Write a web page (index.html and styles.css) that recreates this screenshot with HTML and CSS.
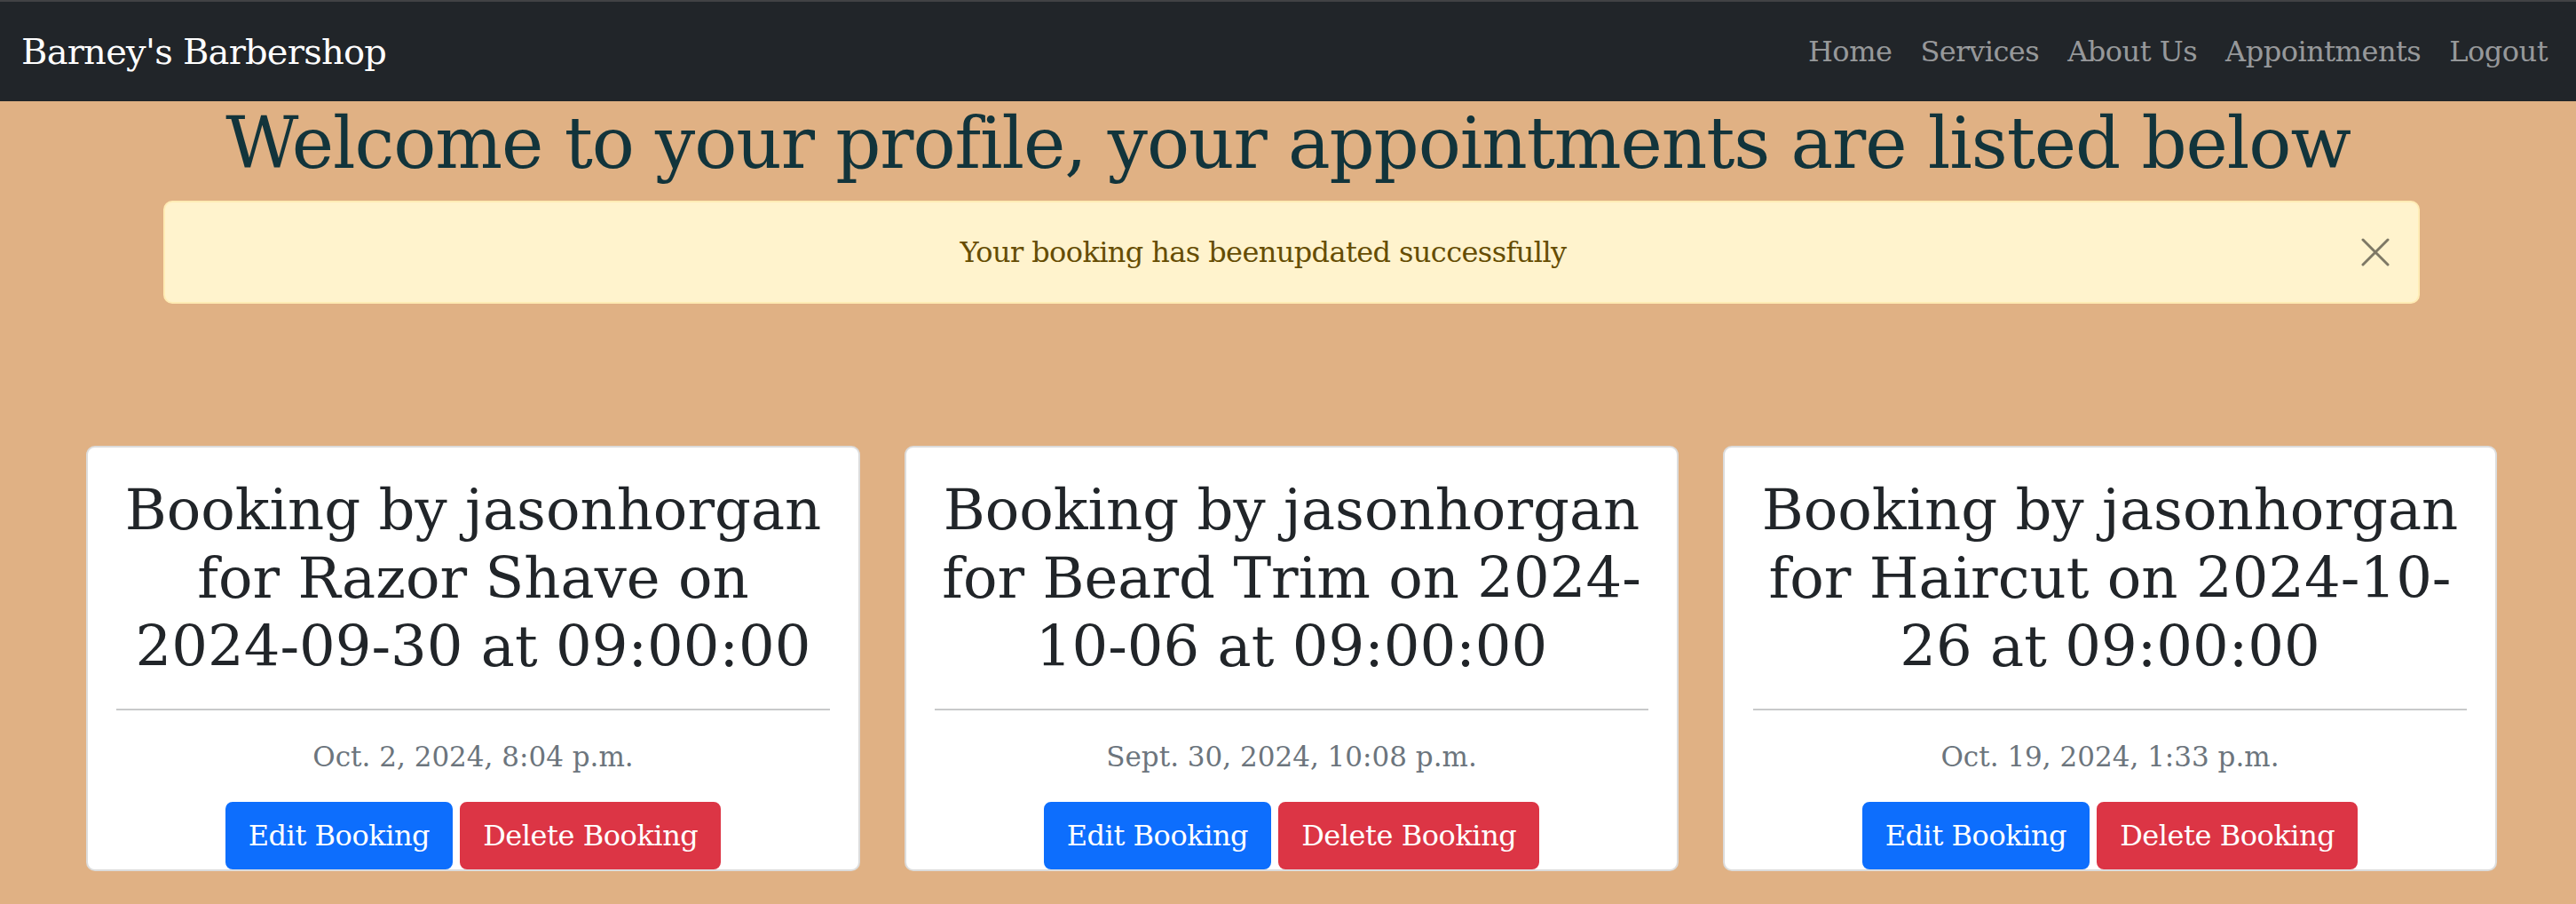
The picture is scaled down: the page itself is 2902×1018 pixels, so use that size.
FILE: index.html
```html
<!DOCTYPE html>
<html lang="en">
<head>
<meta charset="utf-8">
<title>Barney's Barbershop - Profile</title>
<link rel="stylesheet" href="styles.css">
</head>
<body>
<nav class="navbar">
  <a class="brand" href="#">Barney's Barbershop</a>
  <ul class="nav-links">
    <li><a href="#">Home</a></li>
    <li><a href="#">Services</a></li>
    <li><a href="#">About Us</a></li>
    <li><a href="#">Appointments</a></li>
    <li><a href="#">Logout</a></li>
  </ul>
</nav>
<main class="page">
  <h1 class="page-title">Welcome to your profile, your appointments are listed below</h1>
  <div class="alert" role="alert">
    Your booking has beenupdated successfully
    <button class="btn-close" type="button" aria-label="Close">
      <svg viewBox="0 0 16 16" width="32" height="32"><path d="M1 1 L15 15 M15 1 L1 15" stroke="currentColor" stroke-width="1.5" stroke-linecap="round" fill="none"/></svg>
    </button>
  </div>
  <section class="bookings">
    <article class="card">
      <div class="card-body">
        <h2 class="card-title">Booking by jasonhorgan<br>for Razor Shave on<br>2024-09-30 at 09:00:00</h2>
        <hr class="divider">
        <p class="date">Oct. 2, 2024, 8:04 p.m.</p>
        <div class="actions">
          <a class="btn btn-edit" href="#">Edit Booking</a>
          <a class="btn btn-delete" href="#">Delete Booking</a>
        </div>
      </div>
    </article>
    <article class="card">
      <div class="card-body">
        <h2 class="card-title">Booking by jasonhorgan<br>for Beard Trim on 2024-<br>10-06 at 09:00:00</h2>
        <hr class="divider">
        <p class="date">Sept. 30, 2024, 10:08 p.m.</p>
        <div class="actions">
          <a class="btn btn-edit" href="#">Edit Booking</a>
          <a class="btn btn-delete" href="#">Delete Booking</a>
        </div>
      </div>
    </article>
    <article class="card">
      <div class="card-body">
        <h2 class="card-title">Booking by jasonhorgan<br>for Haircut on 2024-10-<br>26 at 09:00:00</h2>
        <hr class="divider">
        <p class="date">Oct. 19, 2024, 1:33 p.m.</p>
        <div class="actions">
          <a class="btn btn-edit" href="#">Edit Booking</a>
          <a class="btn btn-delete" href="#">Delete Booking</a>
        </div>
      </div>
    </article>
  </section>
</main>
</body>
</html>
```

FILE: styles.css
```css
* { box-sizing: border-box; }

html, body {
  margin: 0;
  padding: 0;
}

body {
  background: #e0b184;
  font-family: "DejaVu Serif", "Liberation Serif", serif;
  color: #212529;
  font-size: 32px;
  line-height: 1.5;
}

a { text-decoration: none; }

.navbar {
  display: flex;
  align-items: center;
  justify-content: space-between;
  height: 114px;
  border-top: 2px solid #414244;
  background: #212529;
  padding: 0 16px 0 24px;
}

.brand {
  color: #ffffff;
  font-size: 40px;
  letter-spacing: -0.75px;
  line-height: 60px;
}

.nav-links {
  display: flex;
  list-style: none;
  margin: 0;
  padding: 0;
}

.nav-links a {
  display: block;
  padding: 0 16px;
  color: rgba(255, 255, 255, 0.55);
  font-size: 32px;
  letter-spacing: -0.5px;
  line-height: 48px;
}

.page-title {
  margin: 0 0 16px;
  text-align: center;
  color: #12343b;
  font-size: 80px;
  font-weight: 400;
  letter-spacing: -1.1px;
  line-height: 96px;
}

.alert {
  position: relative;
  margin: 0 176px 0 184px;
  padding: 32px 96px 32px 32px;
  border: 2px solid #ffecb5;
  border-radius: 10px;
  background: #fff3cd;
  color: #664d03;
  text-align: center;
  font-size: 32px;
  letter-spacing: -0.6px;
  line-height: 48px;
}

.btn-close {
  position: absolute;
  top: 0;
  right: 0;
  display: flex;
  padding: 40px 32px;
  border: 0;
  background: transparent;
  color: #000;
  opacity: 0.5;
  cursor: pointer;
}

.bookings {
  display: grid;
  grid-template-columns: repeat(3, 872px);
  column-gap: 50px;
  margin-top: 160px;
  padding-left: 97px;
}

.card {
  background: #ffffff;
  border: 2px solid #dcdcdc;
  border-radius: 10px;
}

.card-body {
  padding: 32px 32px 0;
  text-align: center;
}

.card-title {
  margin: 0 -24px 16px;
  white-space: nowrap;
  font-size: 64px;
  font-weight: 400;
  letter-spacing: 0;
  line-height: 76.8px;
  color: #212529;
}

.divider {
  margin: 32px 0;
  border: 0;
  border-top: 2px solid #c8c9ca;
}

.date {
  margin: 0 0 31px;
  color: #6c757d;
  font-size: 31px;
  line-height: 40px;
}

.actions {
  display: flex;
  justify-content: center;
  gap: 8px;
}

.btn {
  display: inline-block;
  padding: 12px 24px;
  border: 2px solid transparent;
  border-radius: 8px;
  color: #ffffff;
  font-size: 32px;
  letter-spacing: -0.45px;
  line-height: 48px;
}

.btn-edit {
  background: #0d6efd;
  border-color: #0d6efd;
}

.btn-delete {
  background: #dc3545;
  border-color: #dc3545;
}
```
